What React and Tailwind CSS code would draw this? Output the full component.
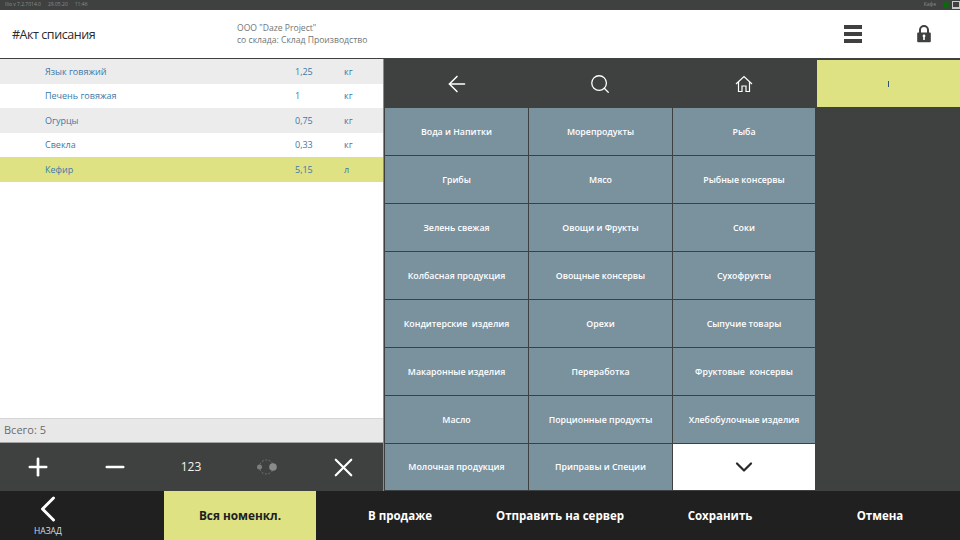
import React from 'react'
import { ArrowLeft, Search, Plus, Minus, X, ChevronDown, ChevronLeft } from 'lucide-react'

const ROWS = [
  ['Язык говяжий', '1,25', 'кг', 'bg-[#ececec]'],
  ['Печень говяжая', '1', 'кг', 'bg-white'],
  ['Огурцы', '0,75', 'кг', 'bg-[#ececec]'],
  ['Свекла', '0,33', 'кг', 'bg-white'],
  ['Кефир', '5,15', 'л', 'bg-[#dfe283]'],
]

const GROUPS = [
  'Вода и Напитки', 'Морепродукты', 'Рыба',
  'Грибы', 'Мясо', 'Рыбные консервы',
  'Зелень свежая', 'Овощи и Фрукты', 'Соки',
  'Колбасная продукция', 'Овощные консервы', 'Сухофрукты',
  'Кондитерские  изделия', 'Орехи', 'Сыпучие товары',
  'Макаронные изделия', 'Переработка', 'Фруктовые  консервы',
  'Масло', 'Порционные продукты', 'Хлебобулочные изделия',
  'Молочная продукция', 'Приправы и Специи',
]

export default function App() {
  return (
    <div className="w-[960px] h-[540px] overflow-hidden flex flex-col bg-[#3f4140] font-['Open_Sans','Noto_Sans',sans-serif]">
      {/* status bar */}
      <div className="h-[10px] shrink-0 flex items-center justify-between pl-[5px] text-[5px] text-[#8a8c8b]">
        <div className="flex gap-[7px]">
          <span>Ilio v 7.2.7014.0</span>
          <span>29.05.20</span>
          <span>11:46</span>
        </div>
        <div className="flex items-center">
          <span className="mr-[7px]">Кафе</span>
          <span className="w-[6px] h-[6px] rounded-full bg-[#0a6b0a] mr-[3px]" />
          <span className="w-[8px] h-[8px] border border-[#c9c9c9] border-b-2" />
        </div>
      </div>

      {/* header */}
      <div className="h-[48px] shrink-0 bg-white flex items-center">
        <div className="w-[237px] pl-[12px] pt-[2px] text-[12.5px] tracking-[-0.45px] text-[#2b2b2b]">#Акт списания</div>
        <div className="w-[579px] text-[8.6px] leading-[12.5px] text-[#6f7577]">
          <div>ООО "Daze Project"</div>
          <div>со склада: Склад Производство</div>
        </div>
        <div className="w-[72px] flex items-center justify-center pl-[2px]">
          <div className="w-[18px] flex flex-col gap-[3px]">
            <span className="h-[4px] bg-[#3f4140]" />
            <span className="h-[4px] bg-[#3f4140]" />
            <span className="h-[4px] bg-[#3f4140]" />
          </div>
        </div>
        <div className="w-[72px] flex justify-center">
          <svg width="14" height="18" viewBox="0 0 14 18">
            <path d="M3 8V5a4 4 0 0 1 8 0v3" fill="none" stroke="#3f4140" strokeWidth="2" />
            <path d="M1 7.5h12a.8.8 0 0 1 .8.8v8a1 1 0 0 1-1 1H1.2a1 1 0 0 1-1-1v-8a.8.8 0 0 1 .8-.8z" fill="#3f4140" />
            <circle cx="7" cy="11" r="1.4" fill="#fff" />
            <rect x="6.2" y="11" width="1.6" height="4" fill="#fff" />
          </svg>
        </div>
      </div>

      <div className="h-[433px] shrink-0 flex">
        {/* document lines */}
        <div className="w-[384px] flex flex-col border-r border-[#8c8c8c] mt-[1px]">
          <div className="flex-1 bg-white">
            {ROWS.map(([name, qty, unit, bg]) => (
              <div key={name} className={`h-[24.5px] flex items-center text-[9px] text-[#3d78a8] ${bg}`}>
                <span className="w-[295px] pl-[45px]">{name}</span>
                <span className="w-[49px]">{qty}</span>
                <span>{unit}</span>
              </div>
            ))}
          </div>
          <div className="h-[25px] bg-[#e8e8e8] border-t border-[#d4d4d4] border-b border-b-[#a5a5a5] pl-[4px] flex items-center text-[11px] text-[#6b6b6b]">
            Всего: 5
          </div>
          <div className="h-[48px] grid grid-cols-5 items-center justify-items-center text-white pr-[1px]">
            <Plus size={28} strokeWidth={2.3} />
            <Minus size={28} strokeWidth={2.3} />
            <span className="text-[12px] text-[#f2f2f2]">123</span>
            <svg width="22" height="16" viewBox="0 0 22 16">
              <circle cx="10.5" cy="8" r="7" fill="none" stroke="#7d7d7d" strokeWidth="0.8" strokeDasharray="2 1.5" />
              <circle cx="3.5" cy="8" r="2.5" fill="#7d7d7d" />
              <circle cx="17" cy="8" r="3.8" fill="#8a8a8a" />
            </svg>
            <X size={31} strokeWidth={1.7} />
          </div>
        </div>

        {/* groups */}
        <div className="w-[433px] pl-[1px] pt-[2px] flex flex-col">
          <div className="h-[47px] grid grid-cols-[143px_144px_143px] items-center justify-items-center text-white">
            <ArrowLeft size={26} strokeWidth={1.4} />
            <Search size={22} strokeWidth={1.4} />
            <svg width="18" height="18" viewBox="0 0 18 18" fill="none" stroke="currentColor" strokeWidth="1.2">
              <path d="M1 9l8-7.5L17 9" />
              <path d="M3.5 7v9.5H7V11h4v5.5h3.5V7" />
            </svg>
          </div>
          <div className="grid grid-cols-[143px_143px_142px] grid-rows-[repeat(7,47px)_46px] gap-[1px] pt-[1px]">
            {GROUPS.map(g => (
              <div key={g} className="bg-[#7a919e] flex items-center justify-center pt-[2px] text-[8.8px] font-semibold text-white whitespace-pre">
                {g}
              </div>
            ))}
            <div className="bg-white flex items-center justify-center text-[#2a2a2a]">
              <ChevronDown size={28} strokeWidth={1.9} />
            </div>
          </div>
        </div>

        <div className="flex-1 pt-[2px]">
          <div className="h-[47px] bg-[#dfe283] flex items-center justify-center">
            <span className="w-[1px] h-[6px] bg-[#2f5570]" />
          </div>
        </div>
      </div>

      {/* bottom bar */}
      <div className="h-[49px] shrink-0 bg-[#202020] flex items-center text-[11.5px] font-bold text-white">
        <div className="w-[164px] h-full relative text-[#d8dde0]">
          <ChevronLeft size={44} strokeWidth={1.6} className="text-white absolute left-[26px] top-[-4px]" />
          <span className="absolute left-[34px] top-[34px] text-[8.5px] font-normal">НАЗАД</span>
        </div>
        <div className="w-[152px] h-full pt-[1px] bg-[#dfe283] text-[#202020] flex items-center justify-center text-[11.8px]">Вся номенкл.</div>
        <div className="w-[168px] pt-[1px] text-center">В продаже</div>
        <div className="w-[152px] pt-[1px] text-center">Отправить на сервер</div>
        <div className="w-[168px] pt-[1px] text-center">Сохранить</div>
        <div className="w-[152px] pt-[1px] text-center">Отмена</div>
      </div>
    </div>
  )
}
